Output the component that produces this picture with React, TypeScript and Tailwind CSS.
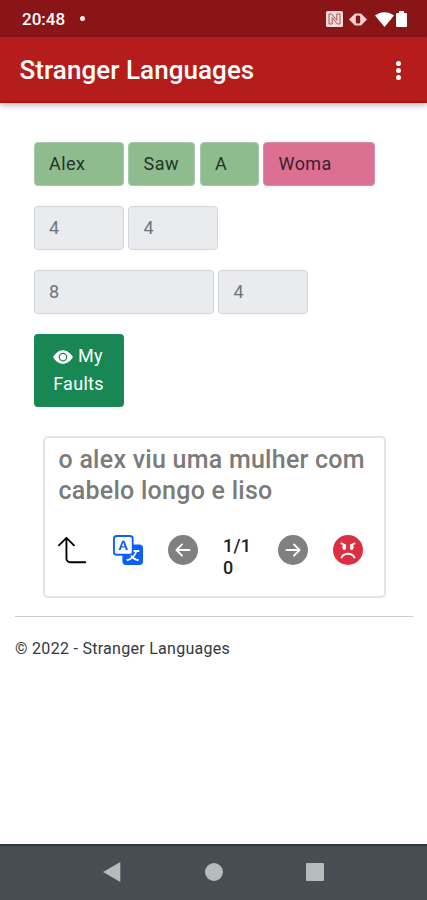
import {
  BsArrow90DegUp,
  BsArrowLeftCircleFill,
  BsArrowRightCircleFill,
  BsEmojiAngryFill,
  BsEyeFill,
  BsTranslate,
} from 'react-icons/bs';
import clsx from 'clsx';

type Word = {
  value: string;
  width: string;
  state?: 'right' | 'wrong';
};

const rows: Word[][] = [
  [
    { value: 'Alex', width: 'w-[90px]', state: 'right' },
    { value: 'Saw', width: 'w-[67px]', state: 'right' },
    { value: 'A', width: 'w-[59px]', state: 'right' },
    { value: 'Woma', width: 'w-[112px]', state: 'wrong' },
  ],
  [
    { value: '4', width: 'w-[90px]' },
    { value: '4', width: 'w-[90px]' },
  ],
  [
    { value: '8', width: 'w-[180px]' },
    { value: '4', width: 'w-[90px]' },
  ],
];

function StatusBar() {
  return (
    <div className="flex h-[37px] items-center bg-[#891517] pt-px pr-[20px] pl-[22px] text-white">
      <span className="text-[17px] leading-5 font-medium">20:48</span>
      <span className="mt-[-1px] ml-[15px] size-[5px] rounded-full bg-[#fbeaea]" />
      <div className="ml-auto flex items-center">
        <svg width="17" height="16" viewBox="0 0 17 16">
          <rect width="17" height="16" rx="1.5" fill="#f3dcda" />
          <path
            d="M3 13V3h2.6l5.2 6.4V3H14v10h-2.6L6.2 6.6V13z"
            fill="none"
            stroke="#a85a58"
            strokeWidth="1"
          />
        </svg>
        <svg className="ml-[6px]" width="18" height="13" viewBox="0 0 18 13">
          <path
            d="M0 6.5 4 2.5 6 .5h6l2 2 4 4-4 4-2 2H6l-2-2z"
            fill="#f3d2cf"
          />
          <rect x="6.8" y="2.5" width="4.4" height="8" rx="1.5" fill="#891517" />
        </svg>
        <svg className="ml-2" width="19" height="15" viewBox="0 0 19 15">
          <path d="M0 3.6C5.4-.9 13.6-.9 19 3.6L9.5 15z" fill="#fff" />
        </svg>
        <svg className="ml-[2px]" width="11" height="16" viewBox="0 0 11 16">
          <path
            d="M3 0h5v2h2q1 0 1 1v12q0 1-1 1H1q-1 0-1-1V3q0-1 1-1h2z"
            fill="#fff"
          />
        </svg>
      </div>
    </div>
  );
}

function WordField({ value, width, state }: Word) {
  return (
    <div
      className={clsx(
        'flex h-11 items-center rounded-[4px] border pl-[14.5px] text-[18px] tracking-[0.45px]',
        width,
        state === 'right' && 'border-[#a5c9aa] bg-[#8fbc8f] text-[#25322a]',
        state === 'wrong' && 'border-[#d98ba8] bg-[#db7093] text-[#3a202b]',
        !state && 'border-[#d2d6da] bg-[#e9ebef] text-[#6c757d]',
      )}
    >
      {value}
    </div>
  );
}

function NavigationBar() {
  return (
    <div className="flex h-[56px] items-center border-t-2 border-[#263b3b] bg-[#464e53] pb-[2px] pl-[103px]">
      <svg width="18" height="20" viewBox="0 0 18 20">
        <path d="M17.3 0v20L0 10z" fill="#b4bcbc" />
      </svg>
      <div className="ml-[84px] size-[18px] rounded-full bg-[#b4bcbc]" />
      <div className="ml-[83px] size-[18px] rounded-[1px] bg-[#b4bcbc]" />
    </div>
  );
}

export default function App() {
  return (
    <div className="flex h-[900px] w-[427px] flex-col bg-white font-['Roboto',sans-serif]">
      <StatusBar />
      <header className="flex h-[66px] items-center justify-between border-b-2 border-[#b00f12] bg-[#b71c1c] pr-[26px] pl-[19.5px] shadow-[0_2px_6px_rgba(0,0,0,0.3)]">
        <h1 className="pt-[2px] text-[26px] leading-8 font-medium tracking-[0.06px] text-white">
          Stranger Languages
        </h1>
        <div className="flex flex-col gap-[2px] pt-[2px]">
          <span className="size-[5px] rounded-full bg-white" />
          <span className="size-[5px] rounded-full bg-white" />
          <span className="size-[5px] rounded-full bg-white" />
        </div>
      </header>

      <main className="flex flex-1 flex-col px-[15px] pt-[38.5px]">
        <div className="flex flex-col gap-5 pl-[18.5px]">
          {rows.map((words, i) => (
            <div key={i} className="flex gap-[4.5px]">
              {words.map((word, j) => (
                <WordField key={j} {...word} />
              ))}
            </div>
          ))}
          <button className="h-[73px] w-[90px] rounded-[4px] bg-[#198754] text-center text-[18px] leading-7 tracking-[0.3px] text-white">
            <BsEyeFill className="mr-[5px] -ml-px inline size-5 align-[-5px]" />
            My
            <br />
            Faults
          </button>
        </div>

        <section className="mt-[29.5px] ml-[27.5px] h-[162px] w-[343px] rounded-[5px] border-2 border-[#e3e4e5] px-[14px] pt-[5.5px]">
          <p className="text-[25px] leading-[31px] font-medium tracking-[0.25px] text-[#7b7b7b]">
            o alex viu uma mulher com cabelo longo e liso
          </p>
          <div className="mt-[29.5px] -ml-[0.5px] grid grid-cols-[repeat(6,55px)] text-[30px]">
            <BsArrow90DegUp className="text-black" />
            <BsTranslate className="text-[#0d5efd]" />
            <BsArrowLeftCircleFill className="text-[#808080]" />
            <div className="text-[18px] leading-[22px] font-medium tracking-[0.2px] text-[#222]">
              1/1
              <br />0
            </div>
            <BsArrowRightCircleFill className="text-[#808080]" />
            <BsEmojiAngryFill className="text-[#dc3042]" />
          </div>
        </section>

        <hr className="mt-[17.5px] -mr-px border-[#c9cbcd]" />
        <footer className="mt-5 text-[16px] leading-6 tracking-[0.28px] text-[#33383d]">
          &copy; 2022 - Stranger Languages
        </footer>
      </main>
      <NavigationBar />
    </div>
  );
}
